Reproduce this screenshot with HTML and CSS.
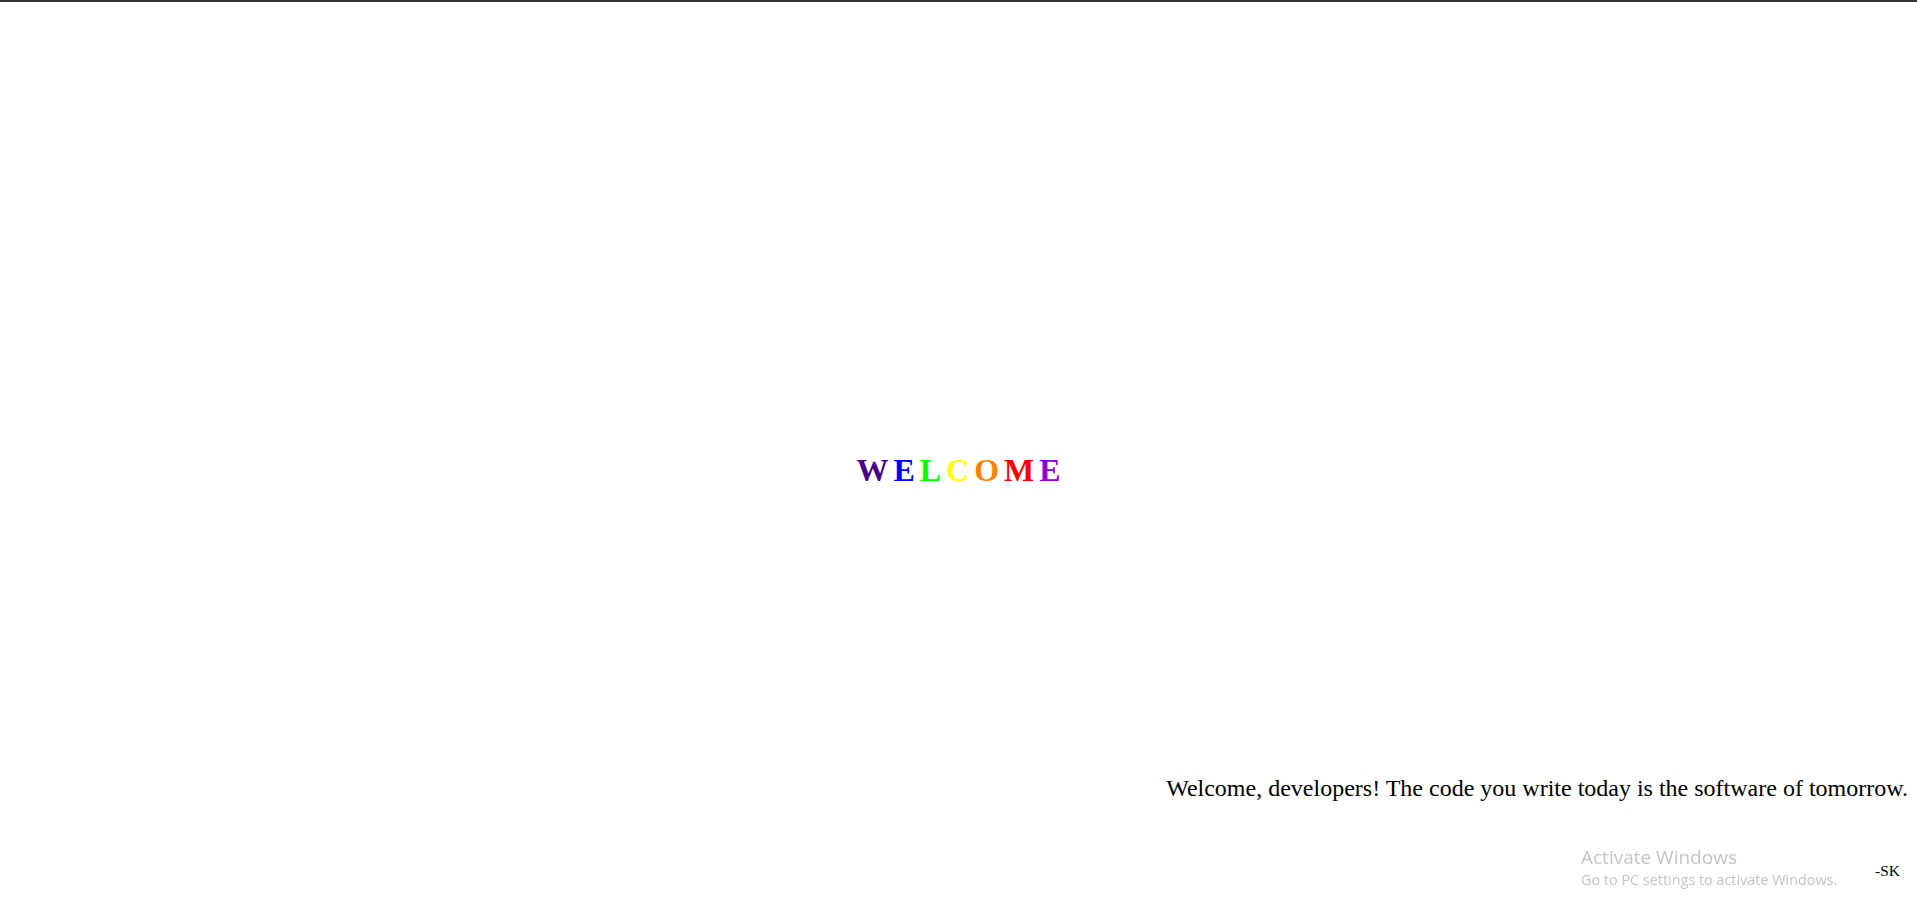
FILE: index.html
```html
<!DOCTYPE html>
<html lang="en">
<head>
<meta charset="utf-8">
<title>Welcome</title>
<link rel="stylesheet" href="styles.css">
</head>
<body>
<div class="page">
  <section class="hero">
    <h1 class="welcome">
      <span class="c-indigo">W</span><span class="c-blue">E</span><span class="c-green">L</span><span class="c-yellow">C</span><span class="c-orange">O</span><span class="c-red">M</span><span class="c-violet">E</span>
    </h1>
  </section>
  <p class="quote">Welcome, developers! The code you write today is the software of tomorrow.</p>
  <p class="sign">-SK</p>
</div>
<div class="activate">
  <div class="activate-title">Activate Windows</div>
  <div class="activate-sub">Go to PC settings to activate Windows.</div>
</div>
</body>
</html>
```
FILE: styles.css
```css
html, body {
  margin: 0;
  padding: 0;
  background: #ffffff;
}
body {
  font-family: "Liberation Serif", "Times New Roman", serif;
  color: #000;
  overflow: hidden;
}
.page {
  border-top: 2px solid #333333;
  height: 916px;
  display: flex;
  flex-direction: column;
}
.hero {
  padding-top: 450px;
  display: flex;
  justify-content: center;
}
.welcome {
  margin: 0;
  font-size: 32px;
  font-weight: bold;
  letter-spacing: 5px;
  line-height: 37px;
  padding-left: 5px;
}
.c-indigo { color: #4b0082; }
.c-blue { color: #0000ff; }
.c-green { color: #00ff00; }
.c-yellow { color: #ffff00; }
.c-orange { color: #ff7f00; }
.c-red { color: #ff0000; }
.c-violet { color: #9400d3; }
.quote {
  margin: 285px 0 0;
  padding-right: 9px;
  text-align: right;
  font-size: 24px;
  line-height: 28px;
}
.sign {
  margin: 60px 0 0;
  padding-right: 17px;
  text-align: right;
  font-size: 15.5px;
  line-height: 18px;
}
.activate {
  position: fixed;
  left: 1581px;
  top: 845px;
  font-family: "Open Sans", "Noto Sans", sans-serif;
  color: #c4c4c4;
}
.activate-title {
  font-size: 19px;
  line-height: 25px;
}
.activate-sub {
  font-size: 14.4px;
  line-height: 20px;
}
```
